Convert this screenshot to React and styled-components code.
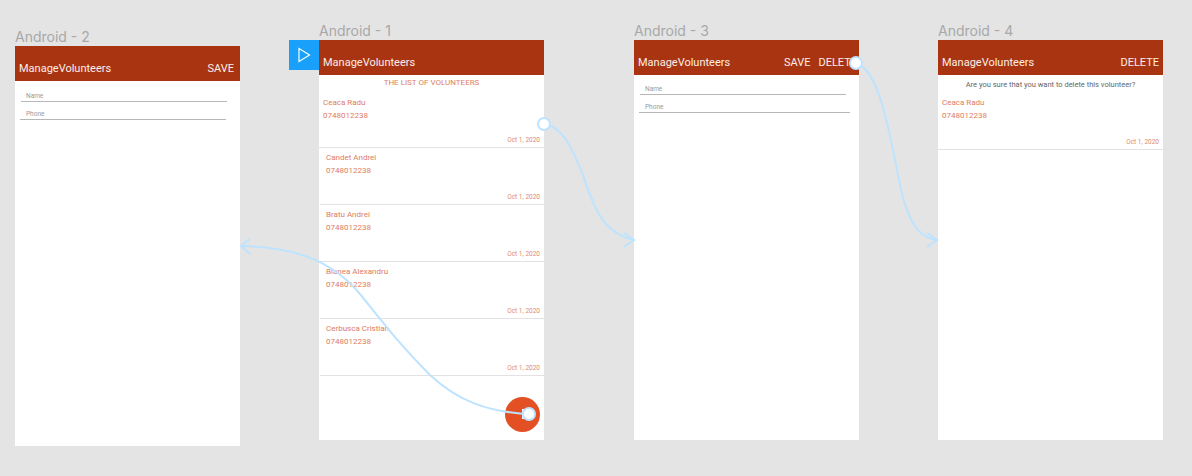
import React from "react"
import styled, { createGlobalStyle } from "styled-components"

const GlobalStyle = createGlobalStyle`
    html, body {
        margin: 0;
        background: #e4e4e4;
    }
`

const Canvas = styled.div`
    position: relative;
    width: 1192px;
    height: 476px;
    overflow: hidden;
    background: #e4e4e4;
    font-family: Roboto, "Liberation Sans", sans-serif;
`

// each artboard sits on the free canvas, same as in the design tool
const Artboard = styled.section`
    position: absolute;
    left: ${(props) => props.$x}px;
    top: ${(props) => props.$y}px;
    width: 225px;
    display: flex;
    flex-direction: column;
`

const BoardName = styled.div`
    height: 18px;
    line-height: 18px;
    font-family: Inter, Roboto, sans-serif;
    font-size: 14px;
    color: #a8a8a8;
    margin-left: ${(props) => props.$indent || 0}px;
`

const Screen = styled.div`
    position: relative;
    height: 400px;
    background: #fff;
    display: flex;
    flex-direction: column;
`

const Header = styled.header`
    height: 35px;
    box-sizing: border-box;
    background: #a93411;
    color: #fbeee9;
    font-size: 11px;
    line-height: 13px;
    display: flex;
    align-items: flex-end;
    justify-content: space-between;
    padding: 0 ${(props) => props.$right ?? 4}px 6px 4px;
`

const Actions = styled.div`
    display: flex;
    gap: 8px;
`

const ListTitle = styled.div`
    height: 16px;
    line-height: 16px;
    text-align: center;
    font-size: 8px;
    color: #dd7f62;
`

const Row = styled.div`
    height: 57px;
    box-sizing: border-box;
    padding: ${(props) => props.$top ?? 4}px 4px 0 ${(props) => props.$indent}px;
    margin-left: ${(props) => props.$shift || 0}px;
    border-bottom: 1px solid #e2e2e2;
    position: relative;
    display: flex;
    flex-direction: column;
`

const Person = styled.div`
    font-size: 8px;
    line-height: 12.5px;
    color: #de7c5f;
`

const DateText = styled.div`
    margin-top: auto;
    margin-bottom: 3px;
    text-align: right;
    font-size: 6.5px;
    line-height: 8px;
    color: #de8a70;
`

const Fields = styled.div`
    padding-top: ${(props) => props.$top}px;
    display: flex;
    flex-direction: column;
    gap: 8px;
`

const Field = styled.div`
    height: 9px;
    box-sizing: content-box;
    margin-left: ${(props) => props.$left}px;
    width: ${(props) => props.$width}px;
    border-bottom: 1px solid #b7b7b7;
    padding-left: ${(props) => props.$pad}px;
    font-size: 6.5px;
    line-height: 9px;
    color: #9a9a9a;
`

const Question = styled.div`
    height: 18px;
    line-height: 20px;
    text-align: center;
    font-size: 7.5px;
    color: #666;
`

const Fab = styled.div`
    position: absolute;
    left: 186px;
    bottom: 8px;
    width: 35px;
    height: 35px;
    border-radius: 50%;
    background: #e25024;
`

const PlayTag = styled.div`
    position: absolute;
    left: -30px;
    top: 0;
    width: 30px;
    height: 30px;
    background: #18a0fb;
    display: flex;
    align-items: center;
    justify-content: center;
`

const Wires = styled.svg`
    position: absolute;
    left: 0;
    top: 0;
    pointer-events: none;
`

const volunteers = [
    { name: "Candet Andrei", phone: "0748012238" },
    { name: "Bratu Andrei", phone: "0748012238" },
    { name: "Bianea Alexandru", phone: "0748012238" },
    { name: "Cerbusca Cristian", phone: "0748012238" },
]

const Handle = ({ x, y }) => (
    <circle cx={x} cy={y} r="6" fill="#fff" stroke="#bde3ff" strokeWidth="2" />
)

const App = () => {
    return (
        <Canvas>
            <GlobalStyle />

            <Artboard $x={15} $y={28}>
                <BoardName>Android - 2</BoardName>
                <Screen>
                    <Header $right={6}>
                        <span>ManageVolunteers</span>
                        <span>SAVE</span>
                    </Header>
                    <Fields $top={11}>
                        <Field $left={6} $width={201} $pad={5}>Name</Field>
                        <Field $left={5} $width={200} $pad={6}>Phone</Field>
                    </Fields>
                </Screen>
            </Artboard>

            <Artboard $x={319} $y={22}>
                <BoardName>Android - 1</BoardName>
                <Screen>
                    <PlayTag>
                        <svg width="14" height="16" viewBox="0 0 14 16">
                            <path d="M2 1.5 L12.5 8 L2 14.5 Z" fill="none" stroke="#fff" strokeWidth="1.2" />
                        </svg>
                    </PlayTag>
                    <Header>
                        <span>ManageVolunteers</span>
                    </Header>
                    <ListTitle>THE LIST OF VOLUNTEERS</ListTitle>
                    <Row $indent={4} $top={6}>
                        <Person>Ceaca Radu</Person>
                        <Person>0748012238</Person>
                        <DateText>Oct 1, 2020</DateText>
                    </Row>
                    {volunteers.map((v) => (
                        <Row key={v.name} $indent={6} $shift={1}>
                            <Person>{v.name}</Person>
                            <Person>{v.phone}</Person>
                            <DateText>Oct 1, 2020</DateText>
                        </Row>
                    ))}
                    <Fab />
                </Screen>
            </Artboard>

            <Artboard $x={634} $y={22}>
                <BoardName>Android - 3</BoardName>
                <Screen>
                    <Header $right={2}>
                        <span>ManageVolunteers</span>
                        <Actions>
                            <span>SAVE</span>
                            <span>DELETE</span>
                        </Actions>
                    </Header>
                    <Fields $top={10}>
                        <Field $left={6} $width={201} $pad={5}>Name</Field>
                        <Field $left={5} $width={205} $pad={6}>Phone</Field>
                    </Fields>
                </Screen>
            </Artboard>

            <Artboard $x={938} $y={22}>
                <BoardName>Android - 4</BoardName>
                <Screen>
                    <Header>
                        <span>ManageVolunteers</span>
                        <span>DELETE</span>
                    </Header>
                    <Question>Are you sure that you want to delete this volunteer?</Question>
                    <Row $indent={4} $top={4}>
                        <Person>Ceaca Radu</Person>
                        <Person>0748012238</Person>
                        <DateText>Oct 1, 2020</DateText>
                    </Row>
                </Screen>
            </Artboard>

            <Wires width="1192" height="476" viewBox="0 0 1192 476" fill="none">
                <g stroke="#bde3ff" strokeWidth="2">
                    <path d="M549 125 C566 132 573 152 581 170 C590 192 596 232 634 240" />
                    <path d="M624 233 L634 240 L624 247" />
                    <path d="M860 65 C880 76 890 135 899 180 C905 212 915 238 937 240" />
                    <path d="M927 233 L937 240 L927 247" />
                    <path d="M524 414 C490 411 460 403 430 375 C400 345 385 325 360 294 C330 258 290 247 241 246" />
                    <path d="M250 239 L241 246 L250 254" />
                </g>
                <rect x="522" y="409" width="7" height="10" fill="#eaf6ff" />
                <Handle x={544} y={124} />
                <Handle x={856} y={63} />
                <Handle x={529} y={414} />
            </Wires>
        </Canvas>
    )
}

export default App
